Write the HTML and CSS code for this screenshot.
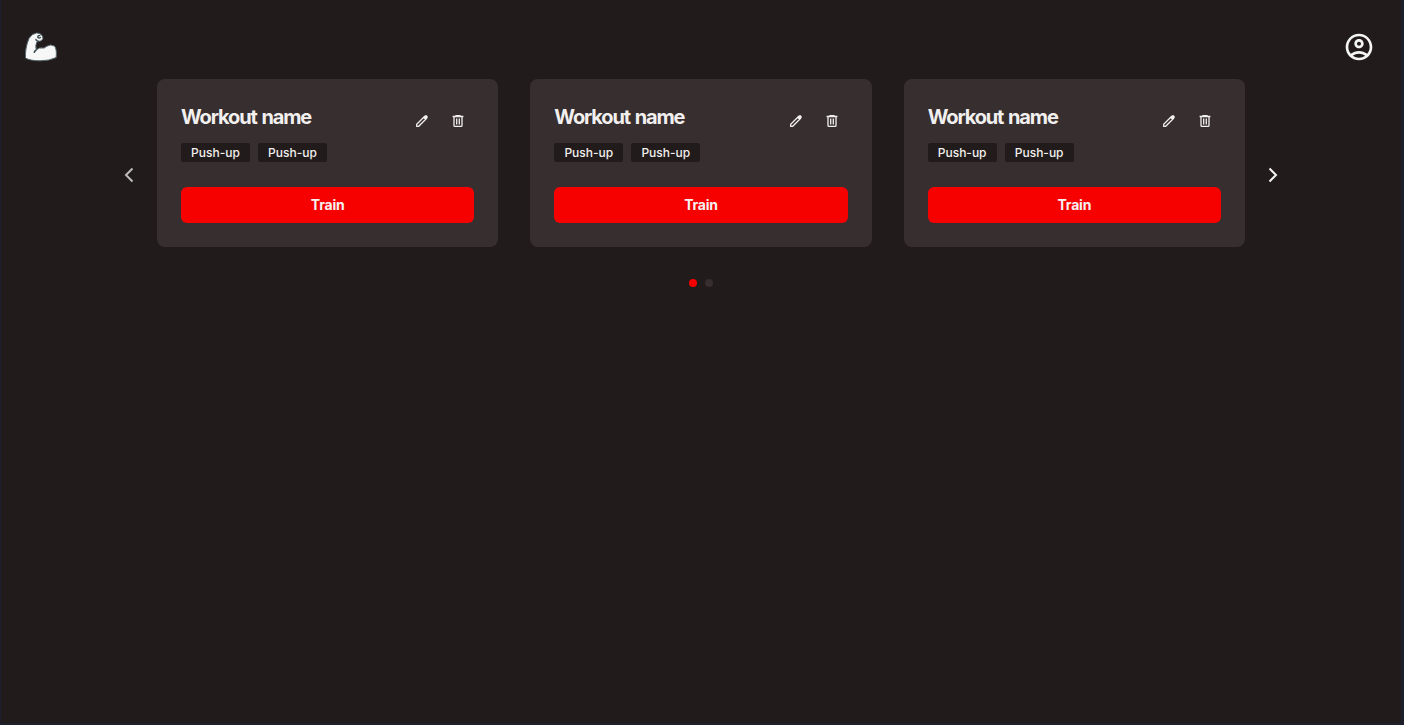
FILE: index.html
```html
<!DOCTYPE html>
<html lang="en">
<head>
<meta charset="utf-8">
<title>Workouts</title>
<link rel="stylesheet" href="styles.css">
</head>
<body>
<svg class="sprite" aria-hidden="true">
  <symbol id="pencil" viewBox="0 0 14 14"><path d="M1.700 12.300v-2L9.500 2.500l2 2-7.800 7.800zM8.600 3.400l2 2" fill="none" stroke="currentColor" stroke-width="1.300"/><path d="M9.200 2.500l1.200-1.200q.6-.5 1.200 0l1.100 1.100q.5.6 0 1.200l-1.200 1.200z" fill="currentColor"/></symbol>
  <symbol id="trash" viewBox="0 0 14 14"><path d="M1.600 2.500h10.800M5 2.200V1.700h4v.5M3 2.500v9q0 .9.800.9h6.400q.8 0 .8-.9v-9M5.700 4.500v6M8.300 4.500v6" fill="none" stroke="currentColor" stroke-width="1.300"/></symbol>
</svg>
<div class="page">
  <header class="topbar">
    <svg class="logo" viewBox="0 0 34 34"><path d="M1.500 27C1 21 2.500 13 5 7.500Q7.500 2.800 12.500 2Q16 1.500 18.500 5Q19.800 8 17.300 9.800Q15.500 10.500 13.500 9.800Q10.800 14 12.300 19Q15 16.200 19 17Q21 17.300 22 15.600Q26.500 12.600 30.500 15Q33 18 32.200 26.500Q25 30 16 29.800Q6 29.800 1.500 27Z" fill="#f7f7f7" stroke="#52666b" stroke-width="1"/><path d="M16.300 4.500q-2.700-.4-2.500 1.900 1.200 1.500 3-.2M13.500 9.800q-1.800-.4-1.700-1.900M12.300 19q-1.700.8-2.300 2.900" fill="none" stroke="#33464c" stroke-width="1.400"/></svg>
    <svg class="account" viewBox="0 0 24 24"><path fill="currentColor" d="M12 2C6.480 2 2 6.480 2 12s4.480 10 10 10 10-4.480 10-10S17.520 2 12 2zM7.350 18.500C8.660 17.560 10.260 17 12 17s3.340.56 4.650 1.500C15.340 19.440 13.740 20 12 20s-3.340-.56-4.650-1.500zm10.790-1.380C16.450 15.800 14.320 15 12 15s-4.450.8-6.140 2.120C4.700 15.730 4 13.950 4 12c0-4.420 3.580-8 8-8s8 3.580 8 8c0 1.950-.7 3.730-1.860 5.120z"/><path fill="currentColor" d="M12 6c-1.930 0-3.500 1.570-3.500 3.500S10.070 13 12 13s3.500-1.570 3.500-3.500S13.930 6 12 6zm0 5c-.83 0-1.500-.67-1.500-1.500S11.170 8 12 8s1.500.67 1.500 1.500S12.830 11 12 11z"/></svg>
  </header>
  <main class="carousel">
    <svg class="arrow arrow-prev" viewBox="0 0 16 16"><path d="M11.500 1.500L5 8l6.500 6.500"/></svg>
    <div class="cards">
      <article class="card">
        <div class="card-head"><h2>Workout name</h2><div class="actions"><svg><use href="#pencil"/></svg><svg><use href="#trash"/></svg></div></div>
        <div class="tags"><span>Push-up</span><span>Push-up</span></div>
        <button class="train">Train</button>
      </article>
      <article class="card">
        <div class="card-head"><h2>Workout name</h2><div class="actions"><svg><use href="#pencil"/></svg><svg><use href="#trash"/></svg></div></div>
        <div class="tags"><span>Push-up</span><span>Push-up</span></div>
        <button class="train">Train</button>
      </article>
      <article class="card">
        <div class="card-head"><h2>Workout name</h2><div class="actions"><svg><use href="#pencil"/></svg><svg><use href="#trash"/></svg></div></div>
        <div class="tags"><span>Push-up</span><span>Push-up</span></div>
        <button class="train">Train</button>
      </article>
    </div>
    <svg class="arrow" viewBox="0 0 16 16"><path d="M4.500 1.500L11 8l-6.500 6.500"/></svg>
  </main>
  <div class="dots"><i class="active"></i><i></i></div>
</div>
</body>
</html>
```

FILE: styles.css
```css
* { box-sizing: border-box; }
body { margin: 0; font-family: Inter, sans-serif; color: #f2f0ee; }
.sprite { display: none; }
.page { height: 725px; background: #221b1b; border: solid #1b202c; border-width: 0 3px 2px 1px; overflow: hidden; }
.topbar { height: 79px; padding: 15px 26px 0 23px; display: flex; align-items: center; justify-content: space-between; }
.logo { width: 34px; height: 34px; margin-top: 1px; }
.account { width: 32px; height: 32px; color: #f5f5f5; }
.carousel { display: flex; align-items: center; justify-content: center; gap: 20px; height: 168px; }
.arrow { width: 16px; height: 16px; margin-top: 24px; fill: none; stroke: #f5f5f5; stroke-width: 2; }
.arrow-prev { stroke: #bdbbbb; }
.cards { width: 1088px; height: 168px; display: grid; grid-template-columns: repeat(3, 1fr); gap: 32px; }
.card { background: #372e2f; border-radius: 8px; padding: 24px; }
.card-head { height: 36px; display: flex; justify-content: space-between; }
h2 { margin: 0; font-size: 20px; line-height: 28px; font-weight: 700; letter-spacing: -1.15px; word-spacing: 1.2px; white-space: nowrap; }
.actions { display: flex; gap: 22px; padding: 11px 9px 0 0; }
.actions svg { width: 14px; height: 14px; }
.tags { display: flex; gap: 8px; margin-top: 4px; }
.tags span { width: 69px; height: 19px; border-radius: 2px; background: #221b1b; font-size: 12px; line-height: 19px; font-weight: 500; text-align: center; }
.train { display: block; width: 100%; height: 36px; margin-top: 25px; padding: 0; border: 0; border-radius: 6px; background: #f70000; color: #f5f1f1; font: 700 14px/36px Inter, sans-serif; letter-spacing: -.2px; }
.dots { display: flex; justify-content: center; gap: 8px; margin-top: 32px; }
.dots i { width: 8px; height: 8px; border-radius: 50%; background: #372e2f; }
.dots .active { background: #f70000; }
```
